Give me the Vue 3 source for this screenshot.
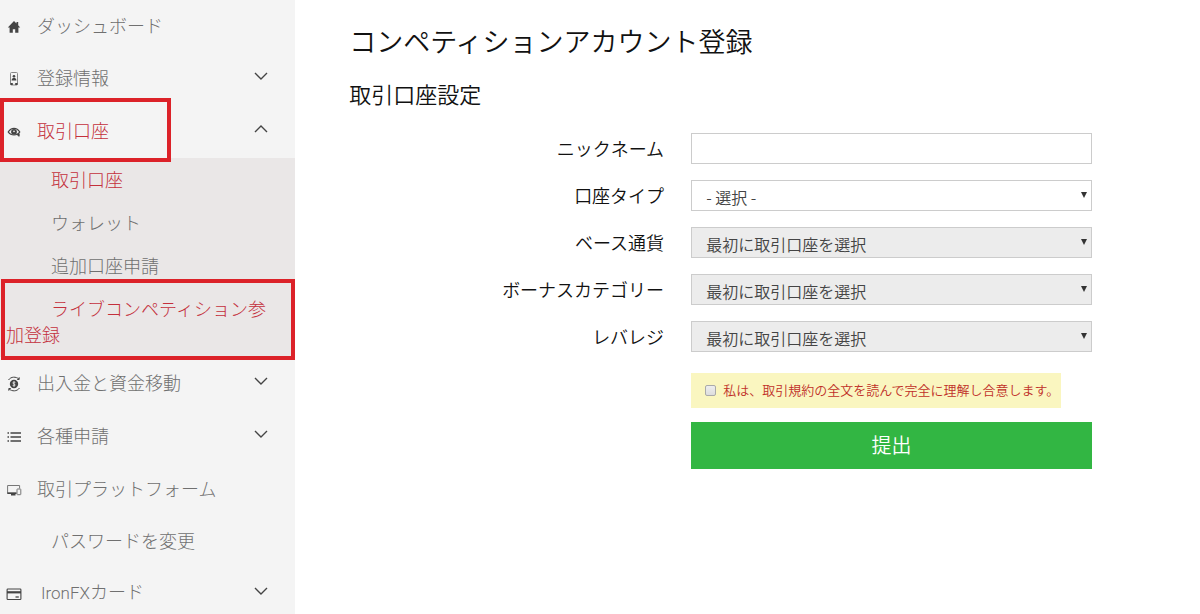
<script setup>
import { ref } from 'vue'

const menu = [
  { label: 'ダッシュボード', icon: 'home' },
  { label: '登録情報', icon: 'profile', arrow: 'down' },
  {
    label: '取引口座',
    icon: 'eye',
    arrow: 'up',
    active: true,
    children: [
      { label: '取引口座', active: true },
      { label: 'ウォレット' },
      { label: '追加口座申請' },
      { label: 'ライブコンペティション参加登録', active: true, framed: true },
    ],
  },
  { label: '出入金と資金移動', icon: 'money', arrow: 'down' },
  { label: '各種申請', icon: 'list', arrow: 'down' },
  { label: '取引プラットフォーム', icon: 'screen' },
  { label: 'パスワードを変更', indent: true },
  { latin: 'IronFX', label: 'カード', icon: 'card', arrow: 'down' },
]

const selects = [
  { id: 'type', label: '口座タイプ', option: '- 選択 -' },
  { id: 'currency', label: 'ベース通貨', option: '最初に取引口座を選択', disabled: true },
  { id: 'bonus', label: 'ボーナスカテゴリー', option: '最初に取引口座を選択', disabled: true },
  { id: 'leverage', label: 'レバレジ', option: '最初に取引口座を選択', disabled: true },
]

const nickname = ref('')
const agreed = ref(false)
</script>

<template>
  <div class="page">
    <nav class="sidebar">
      <ul class="menu">
        <li v-for="item in menu" :key="item.label">
          <a
            href="#"
            class="row"
            :class="{ expandable: item.arrow, active: item.active, framed: item.active, indent: item.indent }"
          >
            <span class="icon">
              <svg v-if="item.icon" viewBox="0 0 16 16" width="16" height="16" fill="none" stroke="#444" aria-hidden="true">
                <g v-if="item.icon === 'home'" fill="#444" stroke="none">
                  <path d="M8 2 1.8 8.4h1.8v5.4h3.2v-3.6h2.4v3.6h3.2V8.4h1.8L12.2 6.3V3h-1.7v1.5z" />
                </g>
                <g v-else-if="item.icon === 'profile'">
                  <rect x="4.5" y="1.5" width="7" height="12.5" rx="1" stroke="#888" />
                  <circle cx="8" cy="5.2" r="1.3" fill="#444" stroke="none" />
                  <path d="M5.6 9.4c0-3.6 4.8-3.6 4.8 0z" fill="#444" stroke="none" />
                  <path d="M4.5 13h2.3M9.2 13h2.3" stroke-width="2" />
                </g>
                <g v-else-if="item.icon === 'eye'">
                  <path d="M2.2 8C5.2 3.1 10.8 3.1 13.8 8 11 12 5 12 2.2 8z" stroke-width="1.2" />
                  <circle cx="8" cy="7.8" r="2.9" fill="#444" stroke="none" />
                  <circle cx="8" cy="7.4" r="0.8" fill="#f4f4f4" stroke="none" />
                  <path d="m10.5 10 2.6 2.3v-2.7" fill="#444" />
                </g>
                <g v-else-if="item.icon === 'money'">
                  <circle cx="8" cy="8" r="4.2" fill="#444" stroke="none" />
                  <path d="M9.3 6.4c-2.8-1-3.2 1.1-1.3 1.6s1.6 2.4-1.3 1.5M8 5.2v5.6" stroke="#f4f4f4" stroke-width="0.8" />
                  <path d="M2.5 4C5 .4 10 .4 13 3.1M13.5 12c-2.5 3.6-7.5 3.6-10.5.9M13.2 1.3v2.2h-2M2.8 14.7v-2.2h2" />
                </g>
                <g v-else-if="item.icon === 'list'">
                  <path d="M4.5 4H15M4.5 8H15M4.5 12H15" stroke-width="1.4" />
                  <path d="M1.5 4H3M1.5 8H3M1.5 12H3" stroke-width="1.4" />
                </g>
                <g v-else-if="item.icon === 'screen'">
                  <path d="M10.5 11H1.6V3.5h12v3" stroke="#777" />
                  <path d="M1.3 11.2h9.2M5 12.8h4.5" stroke-width="1.5" />
                  <rect x="11" y="7" width="3.8" height="5.7" rx="0.5" stroke="#777" />
                </g>
                <g v-else>
                  <rect x="1.1" y="3" width="13.8" height="10.5" rx="0.8" stroke-width="1.1" />
                  <path d="M1 6.3h14" stroke-width="2.2" />
                  <path d="M9.5 11h3.3" stroke-width="1.3" />
                </g>
              </svg>
            </span>
            <span class="text"><span v-if="item.latin" class="latin">{{ item.latin }}</span>{{ item.label }}</span>
            <svg v-if="item.arrow" class="arrow" viewBox="0 0 14 8" width="14" height="8" fill="none" stroke="#444" stroke-width="1.4" aria-hidden="true">
              <path :d="item.arrow === 'up' ? 'M1 7l6-6 6 6' : 'M1 1l6 6 6-6'" />
            </svg>
          </a>
          <ul v-if="item.children" class="submenu">
            <li v-for="child in item.children" :key="child.label">
              <a href="#" class="subrow" :class="{ active: child.active, framed: child.framed }">{{ child.label }}</a>
            </li>
          </ul>
        </li>
      </ul>
    </nav>

    <main class="content">
      <h1>コンペティションアカウント登録</h1>
      <h2>取引口座設定</h2>
      <form class="form" @submit.prevent>
        <label for="nickname">ニックネーム</label>
        <input id="nickname" v-model="nickname" class="field" type="text" />
        <template v-for="s in selects" :key="s.id">
          <label :for="s.id">{{ s.label }}</label>
          <div class="select">
            <select :id="s.id" class="field" :disabled="s.disabled">
              <option>{{ s.option }}</option>
            </select>
            <svg class="caret" viewBox="0 0 6 6" width="6" height="6" aria-hidden="true"><path d="M0 0h6L3 6z" fill="#333" /></svg>
          </div>
        </template>
        <div class="actions">
          <label class="agree" for="agree">
            <input id="agree" v-model="agreed" type="checkbox" />
            <span>私は、取引規約の全文を読んで完全に理解し合意します。</span>
          </label>
          <button type="submit">提出</button>
        </div>
      </form>
    </main>
  </div>
</template>

<style>
body {
  margin: 0;
  background: #fff;
}
</style>

<style scoped>
.page {
  display: flex;
  min-height: 100vh;
  font-family: 'Noto Sans CJK JP', sans-serif;
  font-weight: 350;
  color: #111;
}
.sidebar {
  flex: none;
  width: 24.6%;
  background: #f4f4f4;
  font-weight: 300;
}
.menu,
.submenu {
  margin: 0;
  padding: 0;
  list-style: none;
}
.row {
  position: relative;
  display: flex;
  align-items: center;
  box-sizing: border-box;
  height: 52px;
  padding: 0 27px 3px 6px;
  font-size: 18px;
  line-height: 26px;
  color: #707070;
  text-decoration: none;
}
.row.expandable {
  height: 53px;
}
.icon {
  flex: none;
  width: 31px;
  height: 16px;
  padding-top: 4px;
}
.icon svg {
  display: block;
}
.indent .icon {
  width: 45px;
}
.text {
  flex: 1;
  white-space: nowrap;
}
.latin {
  margin-left: 4px;
  font-family: Roboto, sans-serif;
  font-size: 17px;
}
.arrow {
  flex: none;
  margin-bottom: 2px;
}
.submenu {
  padding-bottom: 1px;
  background: #eae7e7;
}
.subrow {
  position: relative;
  display: block;
  padding: 8px 16px 9px 6px;
  font-size: 18px;
  line-height: 26px;
  text-indent: 45px;
  color: #707070;
  text-decoration: none;
}
.row.active,
.subrow.active {
  color: #c4303c;
}
.framed::after {
  content: '';
  position: absolute;
  border: 4px solid #dc2229;
}
.row.framed::after {
  top: -7px;
  bottom: -4px;
  left: 0;
  width: 163px;
  z-index: 1;
}
.subrow.framed::after {
  top: -8px;
  bottom: -4px;
  left: 1px;
  right: 0;
  z-index: 1;
}
.content {
  flex: 1;
  padding: 21px 108px 40px 54px;
}
h1,
h2 {
  margin: 0;
  font-weight: 350;
}
h1 {
  font-size: 27px;
  line-height: 40px;
}
h2 {
  margin-top: 16px;
  font-size: 22px;
  line-height: 32px;
}
.form {
  display: grid;
  grid-template-columns: 42.4% 1fr;
  column-gap: 27px;
  row-gap: 16px;
  margin-top: 24px;
}
.form > label {
  font-size: 18px;
  line-height: 31px;
  text-align: right;
}
.field {
  display: block;
  box-sizing: border-box;
  width: 100%;
  height: 31px;
  margin: 0;
  padding: 3px 24px 0 14px;
  border: 1px solid #ccc;
  border-radius: 0;
  background: #fff;
  font: inherit;
  font-size: 16px;
  line-height: 24px;
  color: #444;
  appearance: none;
}
.field:disabled {
  background: #ececec;
  color: #444;
  opacity: 1;
}
.select {
  position: relative;
}
.caret {
  position: absolute;
  top: 12px;
  right: 5px;
}
.actions {
  grid-column: 2;
  display: flex;
  flex-direction: column;
  align-items: flex-start;
  gap: 14px;
  margin-top: 5px;
}
.agree {
  display: flex;
  align-items: center;
  gap: 7px;
  box-sizing: border-box;
  height: 35px;
  padding: 0 2px 2px 14px;
  background: #faf6c0;
  font-size: 13px;
  line-height: 20px;
  color: #c03028;
  white-space: nowrap;
}
.agree input {
  width: 11px;
  height: 11px;
  margin: 2px 0 0;
  appearance: none;
  border: 1px solid #aaa;
  border-radius: 2px;
  background: linear-gradient(#eee, #ddd);
}
.agree input:checked {
  background: #666;
}
button {
  width: 100%;
  padding: 8px 0 9px;
  border: 0;
  background: #32b643;
  font: inherit;
  font-size: 20px;
  line-height: 30px;
  color: #fff;
}
</style>
